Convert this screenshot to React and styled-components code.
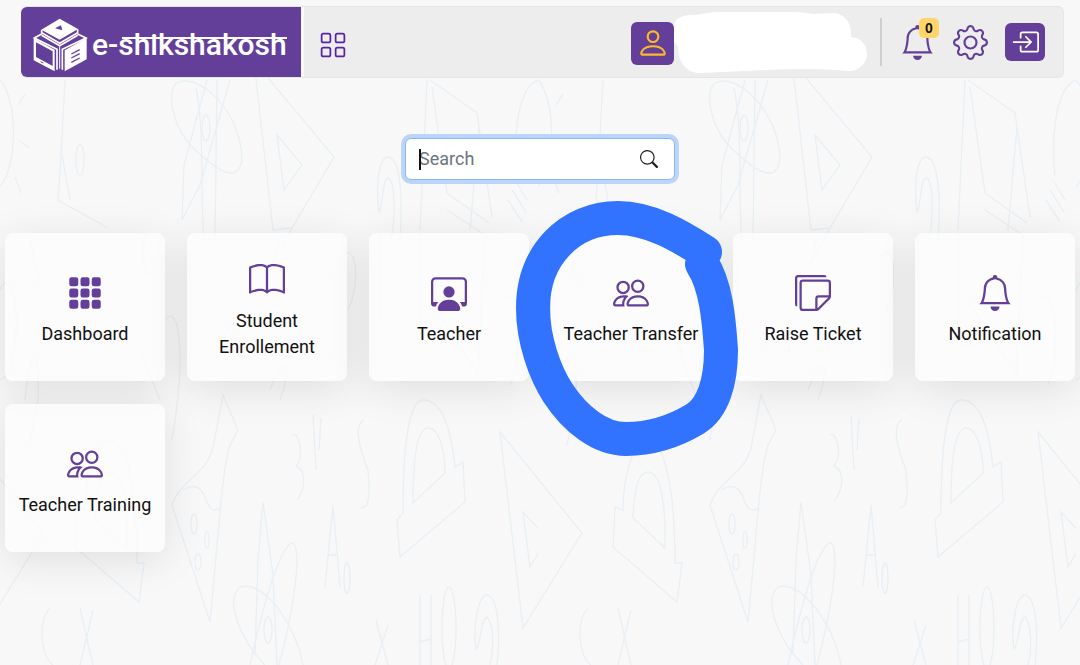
import React from "react";
import styled, { createGlobalStyle } from "styled-components";
import {
  BsBell,
  BsBook,
  BsBoxArrowInRight,
  BsGear,
  BsGrid,
  BsGrid3X3GapFill,
  BsPeople,
  BsPerson,
  BsPersonWorkspace,
  BsSearch,
  BsStickies
} from "react-icons/bs";

const GlobalStyle = createGlobalStyle`
  * {
    box-sizing: border-box;
  }

  body {
    margin: 0;
    background: #f8f8f8;
    color: #111;
    font-family: Roboto, "Liberation Sans", sans-serif;
    font-size: 18px;
    line-height: 26px;
  }
`;

const Page = styled.div`
  position: relative;
  min-height: 100vh;
  padding-top: 6px;
  overflow: hidden;
`;

const Backdrop = styled.svg`
  position: absolute;
  left: 0;
  top: 0;
  width: 100%;
  height: 100%;
  z-index: -1;
`;

const Header = styled.header`
  display: flex;
  align-items: center;
  justify-content: space-between;
  height: 72px;
  margin: 0 16px 0 21px;
  padding-right: 18px;
  background: #ededed;
  border: 1px solid #e6e6e6;
  border-left: 0;
  border-radius: 6px;
`;

const HeaderGroup = styled.div`
  display: flex;
  align-items: center;
  height: 100%;
  gap: ${props => props.$gap || 0}px;
`;

const Brand = styled.a`
  display: flex;
  align-items: center;
  gap: 4px;
  height: 100%;
  padding: 6px 14px 0 12px;
  background: #643f9a;
  border-right: 3px solid #f8f8f8;
  background-clip: padding-box;
  border-radius: 6px 0 0 6px;
  color: #fff;
  text-decoration: none;
`;

const BrandName = styled.span`
  position: relative;
  font-size: 30px;
  line-height: 36px;
  font-weight: 500;

  &::after {
    content: "";
    position: absolute;
    left: 30px;
    right: 0;
    top: 10px;
    height: 2px;
    background: #fff;
  }
`;

const IconButton = styled.button`
  position: relative;
  display: flex;
  align-items: center;
  justify-content: center;
  width: ${props => props.$width || 36}px;
  height: ${props => props.$height || 36}px;
  padding: 0;
  border: 0;
  border-radius: 6px;
  background: ${props => (props.$filled ? "#643f9a" : "none")};
  color: ${props => props.$color || "#643f9a"};
  cursor: pointer;
`;

const MenuButton = styled(IconButton)`
  margin: 6px 0 0 11px;
  color: #5a22a5;
`;

const Profile = styled.div`
  display: flex;
  align-items: center;
  padding-top: 2px;
`;

const NameCover = styled.svg`
  display: block;
  width: 196px;
  height: 62px;
  margin-left: -3px;
`;

const Divider = styled.span`
  width: 2px;
  height: 48px;
  margin-left: -4px;
  background: #cfcfcf;
`;

const Badge = styled.span`
  position: absolute;
  right: -4px;
  top: -6px;
  width: 20px;
  border-radius: 5px;
  background: #ffd56b;
  color: #111;
  font-size: 14px;
  line-height: 20px;
  font-weight: 700;
`;

const SearchForm = styled.form`
  display: flex;
  justify-content: center;
  margin-top: 60px;
`;

const SearchBox = styled.div`
  position: relative;
  display: flex;
  align-items: center;
  width: 270px;
  height: 42px;
  padding: 0 16px 0 13px;
  border: 1px solid #86b7fe;
  border-radius: 6px;
  background: #fff;
  box-shadow: 0 0 0 4px #bdd4f9;
`;

const SearchInput = styled.input`
  flex: 1;
  min-width: 0;
  padding: 0;
  border: 0;
  outline: 0;
  background: none;
  font: inherit;

  &::placeholder {
    color: #6c757d;
    opacity: 1;
  }
`;

const Caret = styled.span`
  position: absolute;
  left: 13px;
  top: 10px;
  width: 2px;
  height: 21px;
  background: #111;
`;

const SearchButton = styled(IconButton)`
  width: 18px;
  height: 18px;
  color: #222;
`;

const Menu = styled.nav`
  display: grid;
  grid-template-columns: repeat(6, 1fr);
  gap: 23px 22px;
  margin-top: 53px;
  padding: 0 5px;
`;

const Card = styled.a`
  position: relative;
  display: flex;
  flex-direction: column;
  align-items: center;
  justify-content: center;
  gap: 10px;
  min-height: 148px;
  padding: 8px 12px 0;
  border-radius: 8px;
  background: rgba(253, 253, 253, 0.7);
  box-shadow: 0 8px 40px rgba(0, 0, 0, 0.1);
  color: #111;
  text-align: center;
  text-decoration: none;

  > svg:first-child {
    color: #643f9a;
  }
`;

const Marker = styled.svg`
  position: absolute;
  left: -35px;
  top: -32px;
  width: 222px;
  height: 256px;
  z-index: 2;
  pointer-events: none;
`;

const items = [
  { label: "Dashboard", icon: BsGrid3X3GapFill },
  { label: "Student Enrollement", icon: BsBook },
  { label: "Teacher", icon: BsPersonWorkspace },
  { label: "Teacher Transfer", icon: BsPeople, marked: true },
  { label: "Raise Ticket", icon: BsStickies },
  { label: "Notification", icon: BsBell },
  { label: "Teacher Training", icon: BsPeople }
];

const Doodles = () => (
  <Backdrop aria-hidden="true">
    <defs>
      <pattern
        id="doodles"
        width="538"
        height="665"
        patternUnits="userSpaceOnUse"
      >
        <g fill="none" stroke="#e9f0f5" strokeWidth="1.4">
          {/* set squares */}
          <path d="M255 70 273 230 292 228 334 157 268 78M277 135 302 165 284 190Z" />
          <path d="M500 432 L582 533 523 628ZM523 512 547 538 530 567Z" />
          <path d="M-38 432 L44 533 -15 628Z" />
          {/* protractors */}
          <path d="M403 513C403 440 410 400 423 400 443 400 451 430 455 467L463 462 465 502 400 557 397 520ZM413 503C413 460 417 428 428 428 439 428 445 450 445 473Z" />
          <path d="M85 510C85 475 96 440 109 440 127 440 137 490 137 563L144 563 139 602 75 547 77 507ZM95 518C96 490 100 472 110 472 124 472 128 510 127 548Z" />
          <path d="M0 80C18 100 18 165 0 187M18 105 25 94M20 141 29 148M15 177 21 193" />
          <path d="M65 80 61 155 58 200 108 228M62 155 70 200" />
          {/* compasses */}
          <path d="M180 82C165 85 170 125 195 150 225 178 240 180 242 158 240 110 200 75 180 82ZM207 80 184 165 182 220 200 185 230 80M196 88C205 130 200 200 204 240M217 80 215 240" />
          <ellipse cx="206" cy="128" rx="4" ry="13" />
          <path d="M263 502 258 560 255 655M263 502 273 575 277 665M250 665C262 610 280 543 293 543 302 550 294 610 279 665M240 587C225 600 240 640 265 665M240 587C265 580 295 625 303 665" />
          <ellipse cx="268" cy="630" rx="4" ry="13" />
          {/* flask */}
          <path d="M223 395 238 430 230 445C222 470 219 530 210 622L172 505C180 480 206 475 213 448ZM183 490Q200 480 206 500 212 515 220 508" />
          <ellipse cx="194" cy="524" rx="3" ry="10" />
          <ellipse cx="207" cy="540" rx="2" ry="8" />
          <ellipse cx="198" cy="562" rx="3" ry="8" />
          {/* clips and curls */}
          <path d="M379 213C375 180 380 157 388 157 401 158 403 200 400 240M379 213C384 200 382 178 389 178 396 185 395 220 391 240" />
          <path d="M476 650C472 620 480 595 487 595 500 598 500 640 497 665M476 650C482 640 480 620 487 617 494 625 494 650 490 665" />
          <ellipse cx="449" cy="628" rx="7" ry="41" />
          <path d="M364 420C353 425 360 450 368 470 370 495 370 508 361 508M292 435C298 430 305 455 296 466 307 470 305 490 297 500" />
          <path d="M420 595V665M431 595V665M420 642 431 639M50 608C38 620 40 655 53 665M80 608 93 665M93 610 80 665" />
          <path d="M325 587 333 505 340 587M328 555H337M313 415 316 470M321 418 319 450M376 620 388 665M388 625 375 665" />
          <ellipse cx="347" cy="578" rx="3" ry="15" />
          <ellipse cx="80" cy="160" rx="4" ry="16" />
          {/* open book */}
          <path d="M427 80 420 230M430 80 477 113 492 217M432 87 447 193 489 223M479 127 470 230" />
          <path d="M538 80C514 90 514 150 517 175M515 180 527 200M512 190 526 212M508 200 522 222" />
          <path d="M30 240 40 285M145 235C140 270 150 280 155 270M280 235 272 265 292 228M380 235V320M420 235V330M447 210 485 235 478 375 430 300" />
          <path d="M0 290C18 250 25 370 0 380M165 320C180 300 186 360 172 440M220 340 236 320M220 352 236 332M340 260C355 235 362 280 348 310" />
          <path d="M25 400C30 350 40 340 38 400L29 445M140 350 160 400M270 390C285 350 293 365 280 400M505 300C515 280 525 350 510 385" />
        </g>
      </pattern>
    </defs>
    <rect width="100%" height="100%" fill="url(#doodles)" />
  </Backdrop>
);

const BrandCube = () => (
  <svg width="55" height="55" viewBox="100 55 165 165" aria-hidden="true">
    <path fill="#fff" d="M180 57 235 88 180 120 125 90Z" />
    <path fill="#643f9a" d="M166 86 184 77 188 92Z" />
    <g fill="none" stroke="#fff" strokeWidth="5">
      <path d="M126 91V99L180 131 234 99V89" />
      <path d="M126 103 104 115 172 149V210M234 103 259 115 188 149V210M126 107 180 138 234 107" />
    </g>
    <path stroke="#fff" strokeWidth="3" d="M180 140V207" />
    <path
      fill="#fff"
      fillRule="evenodd"
      d="M102 116 165 150V215L102 182ZM109 128V172L159 199V155Z"
    />
    <path fill="#fff" d="M195 152 261 115V179L195 215Z" />
    <path
      stroke="#643f9a"
      strokeWidth="4"
      d="M215 163 240 150M215 175 240 162M215 188 240 175"
    />
    <path stroke="#643f9a" strokeWidth="3" d="M123 186 131 190" />
  </svg>
);

export default function App() {
  return (
    <Page>
      <GlobalStyle />
      <Doodles />
      <Header>
        <HeaderGroup>
          <Brand href="#home">
            <BrandCube />
            <BrandName>e-shikshakosh</BrandName>
          </Brand>
          <MenuButton type="button" aria-label="Menu">
            <BsGrid size={28} />
          </MenuButton>
        </HeaderGroup>
        <HeaderGroup $gap={17}>
          <Profile>
            <IconButton
              type="button"
              aria-label="Profile"
              $filled
              $width={43}
              $height={43}
              $color="#fdb92a"
            >
              <BsPerson size={34} />
            </IconButton>
            <NameCover viewBox="670 13 196 62" aria-hidden="true">
              <path
                fill="#fff"
                d="M672 27C675 18 684 15 695 16C730 9 780 10 812 15L834 14C846 16 851 27 850 38C861 39 866 46 866 56C865 66 856 73 846 72C800 67 740 73 696 74C684 72 677 63 677 47C671 43 670 34 672 27Z"
              />
            </NameCover>
          </Profile>
          <Divider />
          <IconButton type="button" aria-label="Notifications">
            <BsBell size={35} />
            <Badge>0</Badge>
          </IconButton>
          <IconButton type="button" aria-label="Settings">
            <BsGear size={35} />
          </IconButton>
          <IconButton
            type="button"
            aria-label="Log out"
            $filled
            $width={40}
            $height={38}
            $color="#fff"
          >
            <BsBoxArrowInRight size={28} />
          </IconButton>
        </HeaderGroup>
      </Header>

      <SearchForm role="search">
        <SearchBox>
          <SearchInput type="text" aria-label="Search" placeholder="Search" />
          <Caret />
          <SearchButton type="submit" aria-label="Submit search">
            <BsSearch size={18} />
          </SearchButton>
        </SearchBox>
      </SearchForm>

      <Menu>
        {items.map(({ label, icon: Icon, marked }) => (
          <Card key={label} href="#menu">
            <Icon size={36} />
            <span>{label}</span>
            {marked && (
              <Marker viewBox="516 201 222 256" aria-hidden="true">
                <path
                  fill="none"
                  stroke="#3172ff"
                  strokeWidth="34"
                  strokeLinecap="round"
                  strokeLinejoin="round"
                  d="M705 252C680 236 650 218 618 218C570 218 533 255 533 308C533 340 545 373 558 393C575 419 600 439 626 439C655 439 680 428 695 419C713 408 721 382 721 350C719 320 716 285 702 264"
                />
              </Marker>
            )}
          </Card>
        ))}
      </Menu>
    </Page>
  );
}
